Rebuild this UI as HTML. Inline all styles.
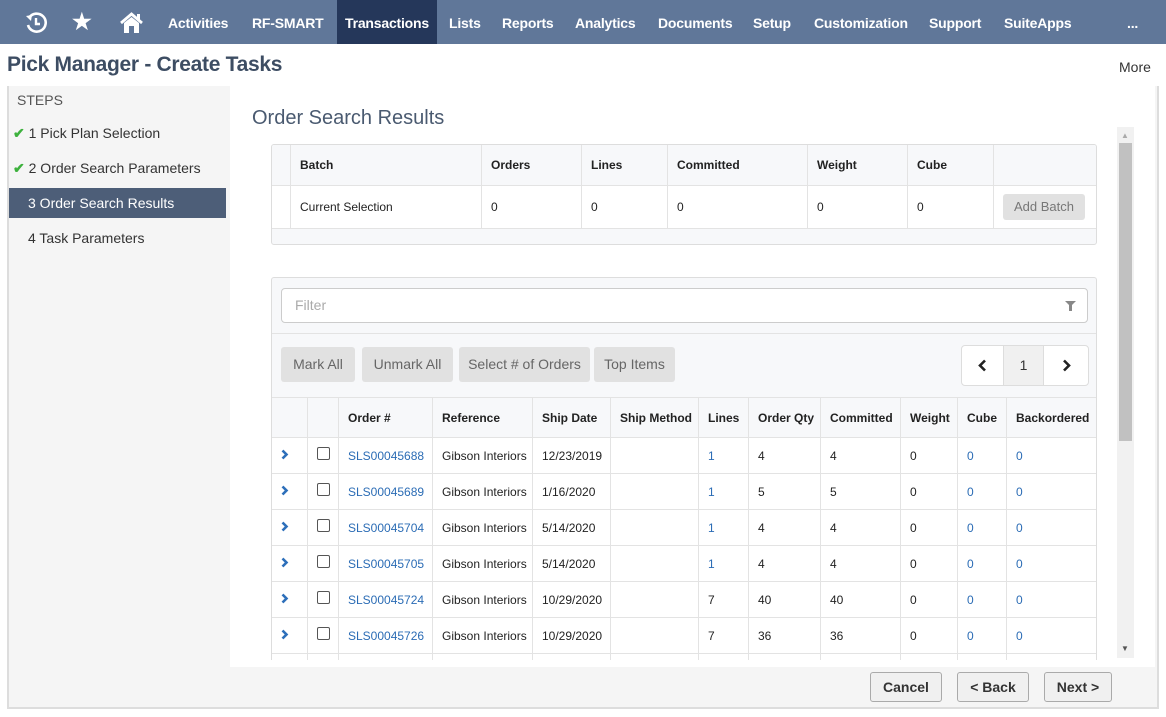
<!DOCTYPE html>
<html><head><meta charset="utf-8"><style>
*{box-sizing:border-box;margin:0;padding:0}
body{width:1166px;height:717px;overflow:hidden;background:#fff;font-family:"Liberation Sans",Arial,sans-serif;position:relative}
.nav{position:absolute;left:0;top:0;width:1166px;height:44px;background:#607799}
.nav .it{position:absolute;top:0;height:44px;line-height:46px;color:#fff;font-weight:bold;font-size:14px;letter-spacing:-0.2px}
.nav .act{background:#25375a}
.abs{position:absolute}
.title{left:7px;top:53px;font-size:21px;color:#3d4d63;font-weight:bold;letter-spacing:-0.3px}
.more{left:1119px;top:59px;font-size:14px;color:#333}
.bg{left:8px;top:86px;width:1150px;height:622px;background:#f5f5f5}
.frame{left:7px;top:86px;width:1152px;height:623px;border:2px solid #ddd;border-top:none}
.step{position:absolute;left:0;width:218px;height:30px;line-height:30px;font-size:14px;color:#333}
.chk{color:#3db13d;font-weight:bold;margin-left:5px}
.content{left:230px;top:86px;width:925px;height:581px;background:#fff}
table{border-collapse:collapse;font-size:12px;color:#222}
td,th{border:1px solid #e3e3e3;text-align:left;padding:0 0 0 9px;font-weight:normal}
th{font-weight:bold}
.btn{position:absolute;top:347px;height:35px;line-height:35px;background:#e1e1e1;border-radius:3px;color:#666;font-size:14px;text-align:center}
a{color:#2b6cb5;text-decoration:none}
.cb{display:inline-block;width:13px;height:13px;border:1px solid #555;border-radius:2px;background:#fff;margin-top:-6px;vertical-align:middle}
.bb{position:absolute;top:672px;height:30px;border:1px solid #aaa;border-radius:3px;background:#f0f0f0;font-weight:bold;font-size:14px;line-height:28px;text-align:center;color:#333}
</style></head><body>
<div class="nav">
<svg class="abs" style="left:25px;top:12px" width="22" height="22" viewBox="0 0 22 22"><path d="M4 6 A9 9 0 1 1 3 13" fill="none" stroke="#fff" stroke-width="2.6"/><path d="M1 4 L6 9 L7 3Z" fill="#fff"/><path d="M11 6 V12 H15" fill="none" stroke="#fff" stroke-width="2.4"/></svg>
<div class="it" style="left:72px;font-size:22px;line-height:44px">★</div>
<svg class="abs" style="left:119px;top:12px" width="25" height="22" viewBox="0 0 25 22"><path d="M2 11 L12.5 2 L23 11" fill="none" stroke="#fff" stroke-width="2.8"/><path d="M5 11 V21 H20 V11 L12.5 5Z" fill="#fff"/><rect x="10" y="14" width="5" height="7" fill="#607799"/><rect x="18" y="2" width="3" height="6" fill="#fff"/></svg>
<div class="it" style="left:168px">Activities</div>
<div class="it" style="left:252px">RF-SMART</div>
<div class="it act" style="left:337px;width:100px;padding-left:8px">Transactions</div>
<div class="it" style="left:449px">Lists</div>
<div class="it" style="left:502px">Reports</div>
<div class="it" style="left:575px">Analytics</div>
<div class="it" style="left:658px">Documents</div>
<div class="it" style="left:753px">Setup</div>
<div class="it" style="left:814px">Customization</div>
<div class="it" style="left:929px">Support</div>
<div class="it" style="left:1004px">SuiteApps</div>
<div class="it" style="left:1127px">...</div>
</div>
<div class="abs title">Pick Manager - Create Tasks</div>
<div class="abs more">More</div>
<div class="abs bg"></div>
<div class="abs" style="left:8px;top:86px;width:222px;height:622px">
<div class="abs" style="left:9px;top:6px;font-size:14px;color:#555">STEPS</div>
<div class="step" style="top:32px"><span class="chk">✔</span> 1 Pick Plan Selection</div>
<div class="step" style="top:67px"><span class="chk">✔</span> 2 Order Search Parameters</div>
<div class="step" style="top:102px;background:#4d5e78;color:#fff;padding-left:20px">3 Order Search Results</div>
<div class="step" style="top:137px;padding-left:20px">4 Task Parameters</div>
</div>
<div class="abs frame"></div>
<div class="abs content"></div>
<div class="abs" style="left:252px;top:107px;font-size:20px;color:#4a5a70">Order Search Results</div>
<div class="abs" style="left:271px;top:144px;width:826px;height:101px;border:1px solid #ddd;border-radius:3px;background:#f7f8fa;overflow:hidden">
<table style="width:826px;margin:-1px">
<tr style="height:41px;background:#f7f8fa"><th style="width:19px"></th><th style="width:191px">Batch</th><th style="width:100px">Orders</th><th style="width:86px">Lines</th><th style="width:140px">Committed</th><th style="width:100px">Weight</th><th style="width:86px">Cube</th><th></th></tr>
<tr style="height:43px;background:#fff"><td></td><td>Current Selection</td><td>0</td><td>0</td><td>0</td><td>0</td><td>0</td><td><div style="width:82px;height:26px;line-height:26px;background:#e1e1e1;border-radius:3px;color:#777;text-align:center;font-size:13px">Add Batch</div></td></tr>
</table></div>
<div class="abs" style="left:271px;top:277px;width:826px;height:383px;border:1px solid #ddd;border-bottom:none;border-radius:3px 3px 0 0;background:#f7f8fa;overflow:hidden">
<div class="abs" style="left:9px;top:10px;width:807px;height:35px;border:1px solid #ccc;border-radius:4px;background:#fff;font-size:14px;color:#aaa;line-height:33px;padding-left:13px">Filter
<svg class="abs" style="right:11px;top:12px" width="11" height="10" viewBox="0 0 11 10"><path d="M0 0H11L7 4V10H4V4Z" fill="#888"/></svg></div>
<div class="abs" style="left:0;top:55px;width:826px;border-top:1px solid #e3e3e3"></div>
<div class="abs" style="left:689px;top:67px;width:128px;height:41px;border:1px solid #ddd;border-radius:4px;background:#fff;font-size:14px">
<div class="abs" style="left:41px;top:0;width:41px;height:39px;background:#f0f0f0;border-left:1px solid #ddd;border-right:1px solid #ddd;text-align:center;line-height:39px;color:#333">1</div>
<svg class="abs" style="left:16px;top:13px" width="9" height="13" viewBox="0 0 9 13"><path d="M7 1.5L2 6.5L7 11.5" fill="none" stroke="#222" stroke-width="2.6"/></svg>
<svg class="abs" style="left:100px;top:13px" width="9" height="13" viewBox="0 0 9 13"><path d="M2 1.5L7 6.5L2 11.5" fill="none" stroke="#222" stroke-width="2.6"/></svg>
</div>
<table class="abs" style="left:-1px;top:119px;width:827px;background:#fff">
<tr style="height:40px;background:#f7f8fa"><th style="width:36px"></th><th style="width:31px"></th><th style="width:94px">Order #</th><th style="width:100px">Reference</th><th style="width:78px">Ship Date</th><th style="width:88px;padding-left:9px">Ship Method</th><th style="width:50px">Lines</th><th style="width:72px">Order Qty</th><th style="width:80px">Committed</th><th style="width:57px">Weight</th><th style="width:49px">Cube</th><th>Backordered</th></tr>
<tr style="height:36px"><td><svg width="8" height="11" viewBox="0 0 8 11"><path d="M1.5 1.5L5.5 5.5L1.5 9.5" fill="none" stroke="#2d6fba" stroke-width="2.6"/></svg></td><td><span class="cb"></span></td><td><a>SLS00045688</a></td><td>Gibson Interiors</td><td>12/23/2019</td><td></td><td><a>1</a></td><td>4</td><td>4</td><td>0</td><td><a>0</a></td><td><a>0</a></td></tr>
<tr style="height:36px"><td><svg width="8" height="11" viewBox="0 0 8 11"><path d="M1.5 1.5L5.5 5.5L1.5 9.5" fill="none" stroke="#2d6fba" stroke-width="2.6"/></svg></td><td><span class="cb"></span></td><td><a>SLS00045689</a></td><td>Gibson Interiors</td><td>1/16/2020</td><td></td><td><a>1</a></td><td>5</td><td>5</td><td>0</td><td><a>0</a></td><td><a>0</a></td></tr>
<tr style="height:36px"><td><svg width="8" height="11" viewBox="0 0 8 11"><path d="M1.5 1.5L5.5 5.5L1.5 9.5" fill="none" stroke="#2d6fba" stroke-width="2.6"/></svg></td><td><span class="cb"></span></td><td><a>SLS00045704</a></td><td>Gibson Interiors</td><td>5/14/2020</td><td></td><td><a>1</a></td><td>4</td><td>4</td><td>0</td><td><a>0</a></td><td><a>0</a></td></tr>
<tr style="height:36px"><td><svg width="8" height="11" viewBox="0 0 8 11"><path d="M1.5 1.5L5.5 5.5L1.5 9.5" fill="none" stroke="#2d6fba" stroke-width="2.6"/></svg></td><td><span class="cb"></span></td><td><a>SLS00045705</a></td><td>Gibson Interiors</td><td>5/14/2020</td><td></td><td><a>1</a></td><td>4</td><td>4</td><td>0</td><td><a>0</a></td><td><a>0</a></td></tr>
<tr style="height:36px"><td><svg width="8" height="11" viewBox="0 0 8 11"><path d="M1.5 1.5L5.5 5.5L1.5 9.5" fill="none" stroke="#2d6fba" stroke-width="2.6"/></svg></td><td><span class="cb"></span></td><td><a>SLS00045724</a></td><td>Gibson Interiors</td><td>10/29/2020</td><td></td><td>7</td><td>40</td><td>40</td><td>0</td><td><a>0</a></td><td><a>0</a></td></tr>
<tr style="height:36px"><td><svg width="8" height="11" viewBox="0 0 8 11"><path d="M1.5 1.5L5.5 5.5L1.5 9.5" fill="none" stroke="#2d6fba" stroke-width="2.6"/></svg></td><td><span class="cb"></span></td><td><a>SLS00045726</a></td><td>Gibson Interiors</td><td>10/29/2020</td><td></td><td>7</td><td>36</td><td>36</td><td>0</td><td><a>0</a></td><td><a>0</a></td></tr>
<tr style="height:36px"><td></td><td></td><td></td><td></td><td></td><td></td><td></td><td></td><td></td><td></td><td></td><td></td></tr>
</table>
</div>
<div class="btn" style="left:281px;width:74px">Mark All</div>
<div class="btn" style="left:362px;width:91px">Unmark All</div>
<div class="btn" style="left:459px;width:131px">Select # of Orders</div>
<div class="btn" style="left:594px;width:81px">Top Items</div>
<div class="abs" style="left:1117px;top:127px;width:17px;height:531px;background:#f1f1f1"></div>
<div class="abs" style="left:1119px;top:143px;width:13px;height:298px;background:#c1c1c1"></div>
<div class="abs" style="left:1121px;top:131px;font-size:8px;color:#aaa">▲</div>
<div class="abs" style="left:1121px;top:644px;font-size:8px;color:#555">▼</div>
<div class="bb" style="left:870px;width:72px">Cancel</div>
<div class="bb" style="left:957px;width:72px">&lt; Back</div>
<div class="bb" style="left:1044px;width:68px">Next &gt;</div>
</body></html>
